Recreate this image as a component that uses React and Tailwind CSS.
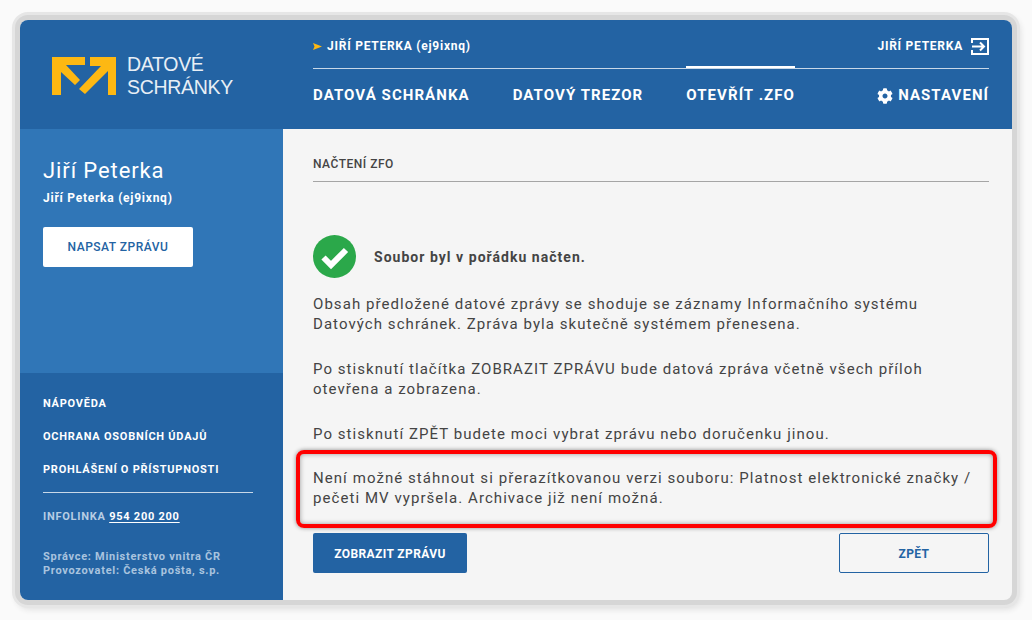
import { FaCog } from 'react-icons/fa'

const ODKAZY = ['NÁPOVĚDA', 'OCHRANA OSOBNÍCH ÚDAJŮ', 'PROHLÁŠENÍ O PŘÍSTUPNOSTI']

function Logo() {
  return (
    <svg width="65" height="38" viewBox="0 0 65 38" className="block shrink-0">
      <path fill="#fdb813" d="M0 0H33V8H14L28 23 23 28 9 15V38H0Z" />
      <path fill="#fdb813" d="M38 0H64V38H56V14L33 37 27 32 49 9H38Z" />
    </svg>
  )
}

function LogoutIcon() {
  return (
    <svg width="18" height="17" viewBox="0 0 18 17" fill="none" stroke="white" strokeWidth="2" className="block">
      <path d="M1 5V1H17V16H1V12" />
      <path d="M1 8.5H13M9 4.5L13 8.5 9 12.5" />
    </svg>
  )
}

function CheckIcon() {
  return (
    <svg width="43" height="43" viewBox="0 0 43 43" className="block shrink-0">
      <circle cx="21.5" cy="21.5" r="21.5" fill="#2ba84a" />
      <path d="M10.5 22.5L18 30 33 15" fill="none" stroke="white" strokeWidth="6" />
    </svg>
  )
}

export default function App() {
  return (
    <div className="w-[1032px] h-[620px] bg-[#fafafa] p-[20px] overflow-hidden font-['Roboto',sans-serif]">
      <div className="relative w-[992px] h-[580px] bg-[#f5f5f5] rounded-[8px] flex flex-col shadow-[0_0_0_5px_#d6d6d6,0_0_0_8px_#e6e6e6,2px_3px_6px_6px_#dcdcdc]">
        <header className="h-[109px] shrink-0 bg-[#2363a3] rounded-t-[8px] flex">
          <div className="w-[293px] shrink-0 pl-[32px] pt-[33px]">
            <div className="flex items-center gap-[10px]">
              <Logo />
              <div className="font-['Liberation_Sans',sans-serif] text-[19.5px] leading-[23px] text-[#e8eff6] tracking-[-0.3px]">
                <div>DATOVÉ</div>
                <div>SCHRÁNKY</div>
              </div>
            </div>
          </div>
          <div className="flex-1 pr-[23px] text-white">
            <div className="h-[49px] flex items-center justify-between border-b border-[#c8d8e8] font-bold text-[12px] tracking-[0.75px] pt-[4px]">
              <div className="flex items-center gap-[5px]">
                <svg width="9" height="7" viewBox="0 0 9 7" className="block">
                  <path d="M0 0L9 3.5 0 7 1.5 3.5Z" fill="#fdb813" />
                </svg>
                <span>JIŘÍ PETERKA (ej9ixnq)</span>
              </div>
              <div className="flex items-center gap-[8px]">
                <span>JIŘÍ PETERKA</span>
                <LogoutIcon />
              </div>
            </div>
            <nav className="flex items-center h-[52px] text-[15px] font-bold tracking-[1.07px]">
              <span className="mr-[43px]">DATOVÁ SCHRÁNKA</span>
              <span className="mr-[43px]">DATOVÝ TREZOR</span>
              <span className="relative">
                OTEVŘÍT .ZFO
                <span className="absolute left-0 right-0 top-[-18px] h-[2px] bg-white" />
              </span>
              <span className="ml-auto flex items-center gap-[5px] text-[15px] pt-[1px]">
                <FaCog size={16} />
                NASTAVENÍ
              </span>
            </nav>
          </div>
        </header>

        <div className="flex flex-1 min-h-0">
          <aside className="w-[263px] shrink-0 flex flex-col text-white rounded-bl-[8px] overflow-hidden">
            <div className="h-[244px] bg-[#3076b7] pl-[23px] pt-[29px]">
              <div className="text-[22px] leading-[26px] tracking-[0.9px]">Jiří Peterka</div>
              <div className="mt-[6px] text-[12px] leading-[16px] font-bold tracking-[0.75px]">Jiří Peterka (ej9ixnq)</div>
              <button className="mt-[21px] w-[150px] h-[40px] bg-white rounded-[2px] text-[#2363a3] text-[12px] font-medium tracking-[0.5px]">
                NAPSAT ZPRÁVU
              </button>
            </div>
            <div className="flex-1 bg-[#2363a3] pl-[23px] pr-[30px] pt-[23px]">
              <div className="flex flex-col gap-[18px] text-[11px] leading-[15px] font-bold tracking-[0.75px]">
                {ODKAZY.map(o => <div key={o}>{o}</div>)}
              </div>
              <div className="mt-[15px] border-t border-[#c8d8e8] pt-[16px] text-[11px] leading-[15px] font-bold tracking-[0.75px]">
                <span className="text-[#b7cde3]">INFOLINKA </span>
                <span className="underline underline-offset-2">954 200 200</span>
              </div>
              <div className="mt-[26px] text-[11px] leading-[14px] font-bold tracking-[0.72px] text-[#a9c4df]">
                <div>Správce: Ministerstvo vnitra ČR</div>
                <div>Provozovatel: Česká pošta, s.p.</div>
              </div>
            </div>
          </aside>

          <main className="flex-1 pl-[30px] pr-[23px] text-[#444] text-[15px] leading-[20px] tracking-[1.06px]">
            <div className="h-[53px] pt-[25px] border-b border-[#a5a5a5] text-[12px] leading-[20px] font-medium tracking-[0.5px]">NAČTENÍ ZFO</div>
            <div className="mt-[53px] flex items-center gap-[18px] font-bold text-[14px]">
              <CheckIcon />
              <span className="tracking-[1.03px]">Soubor byl v pořádku načten.</span>
            </div>
            <p className="mt-[16px]">Obsah předložené datové zprávy se shoduje se záznamy Informačního systému Datových schránek. Zpráva byla skutečně systémem přenesena.</p>
            <p className="mt-[25px]">Po stisknutí tlačítka ZOBRAZIT ZPRÁVU bude datová zpráva včetně všech příloh otevřena a zobrazena.</p>
            <p className="mt-[25px]">Po stisknutí ZPĚT budete moci vybrat zprávu nebo doručenku jinou.</p>
            <p className="mt-[24px]">Není možné stáhnout si přerazítkovanou verzi souboru: Platnost elektronické značky / pečeti MV vypršela. Archivace již není možná.</p>
            <div className="mt-[25px] flex justify-between">
              <button className="w-[154px] h-[40px] pt-[1px] bg-[#2363a3] rounded-[2px] text-white text-[12px] font-bold tracking-[0.4px]">ZOBRAZIT ZPRÁVU</button>
              <button className="w-[150px] h-[40px] pt-[1px] border border-[#2363a3] rounded-[2px] text-[#2363a3] text-[12px] font-bold tracking-[0.4px]">ZPĚT</button>
            </div>
          </main>
        </div>

        {/* red annotation over the text */}
        <div className="absolute left-[276px] top-[430px] w-[701px] h-[78px] border-[4px] border-[#ff0000] rounded-[8px] shadow-[0_0_4px_#888,inset_0_0_5px_#999] pointer-events-none" />
      </div>
    </div>
  )
}
